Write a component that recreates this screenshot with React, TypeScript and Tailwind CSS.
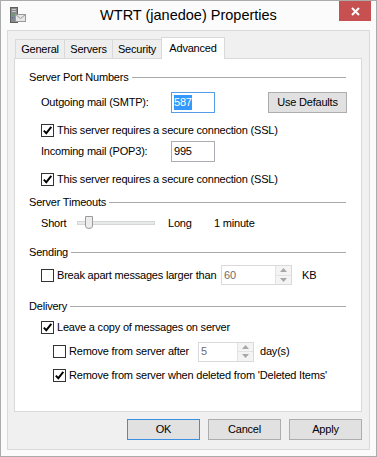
import React from "react";

const font = "font-['Liberation_Sans',Arial,sans-serif]";

function Check({ checked }: { checked: boolean }) {
  return (
    <div className="w-[13px] h-[13px] border border-[#333333] bg-white flex items-center justify-center shrink-0">
      {checked && (
        <svg width="11" height="11" viewBox="0 0 11 11">
          <path d="M1.8 5.6 L4.3 8.2 L9.3 1.8" fill="none" stroke="#000" strokeWidth="1.9" />
        </svg>
      )}
    </div>
  );
}

function CheckRow({ checked, label, indent }: { checked: boolean; label: string; indent: string }) {
  return (
    <div className={`flex items-center h-[16px] gap-[3px] ${indent}`}>
      <Check checked={checked} />
      <span>{label}</span>
    </div>
  );
}

function Header({ text, mt }: { text: string; mt: string }) {
  return (
    <div className={`flex items-center h-[16px] gap-[3px] ${mt}`}>
      <span>{text}</span>
      <div className="flex-1 h-px bg-[#a8a8a8]" />
    </div>
  );
}

function Spin({ value, w }: { value: string; w: string }) {
  return (
    <div className={`flex h-[20px] border border-[#d9d9d9] bg-white ${w}`}>
      <div className="flex-1 pl-[2px] flex items-center text-[#6d6d6d]">{value}</div>
      <div className="w-[16px] flex flex-col border-l border-[#e3e3e3]">
        <div className="flex-1 bg-[#f4f4f4] border-b border-[#e3e3e3] flex items-center justify-center">
          <svg width="7" height="4" viewBox="0 0 7 4">
            <path d="M0 4 L3.5 0 L7 4 Z" fill="#a8a8a8" />
          </svg>
        </div>
        <div className="flex-1 bg-[#f4f4f4] flex items-center justify-center">
          <svg width="7" height="4" viewBox="0 0 7 4">
            <path d="M0 0 L3.5 4 L7 0 Z" fill="#a8a8a8" />
          </svg>
        </div>
      </div>
    </div>
  );
}

function Btn({ label, def, w }: { label: string; def?: boolean; w: string }) {
  return (
    <div
      className={`h-[21px] ${w} border ${def ? "border-[#3c8fe0]" : "border-[#adadad]"} bg-[#e1e1e1] flex items-center justify-center`}
    >
      {label}
    </div>
  );
}

export default function App() {
  return (
    <div className={`w-[377px] h-[457px] ${font} text-[11px] tracking-[-0.2px] text-black`}>
      <div className="w-[377px] h-[457px] border border-[#ababab] bg-[#fbfbfb] flex flex-col">
        {/* Title bar */}
        <div className="h-[29px] relative flex items-center justify-center">
          <div className="absolute left-[9px] top-[6px]">
            <svg width="16" height="17" viewBox="0 0 16 17">
              <rect x="0.5" y="0.5" width="7" height="15" fill="#8a8a8a" stroke="#5f5f5f" />
              <rect x="2" y="2" width="4" height="1" fill="#c8c8c8" />
              <rect x="2" y="4" width="4" height="1" fill="#c8c8c8" />
              <rect x="2" y="7" width="1.5" height="1.5" fill="#4caf50" />
              <rect x="2" y="10" width="1.5" height="1.5" fill="#3a7bd5" />
              <rect x="5.5" y="7.5" width="10" height="7" fill="#e6e6e6" stroke="#9a9a9a" />
              <path d="M5.5 7.5 L10.5 11.5 L15.5 7.5" fill="none" stroke="#9a9a9a" />
            </svg>
          </div>
          <span className="text-[14.5px] tracking-normal text-black">WTRT (janedoe) Properties</span>
          <div className="absolute right-[5px] top-0 w-[32px] h-[20px] bg-[#c75050] flex items-center justify-center">
            <svg width="9" height="9" viewBox="0 0 9 9">
              <path d="M1 1 L8 8 M8 1 L1 8" stroke="#fff" strokeWidth="2" />
            </svg>
          </div>
        </div>

        {/* Dialog panel */}
        <div className="mx-[6px] mb-[6px] flex-1 border border-[#dadada] bg-[#f0f0f0] flex flex-col pl-[6px] pr-[7px] pt-[6px]">
          {/* Tabs */}
          <div className="h-[21px] flex items-end pl-[1px] relative z-10">
            <div className="h-[19px] w-[50px] border border-b-0 border-[#d9d9d9] bg-[#eeeeee] flex items-center justify-center">
              General
            </div>
            <div className="h-[19px] w-[49px] -ml-px border border-b-0 border-[#d9d9d9] bg-[#eeeeee] flex items-center justify-center">
              Servers
            </div>
            <div className="h-[19px] w-[50px] -ml-px border border-b-0 border-[#d9d9d9] bg-[#eeeeee] flex items-center justify-center">
              Security
            </div>
            <div className="h-[22px] w-[64px] -ml-px -mb-px border border-b-0 border-[#d9d9d9] bg-white flex items-start justify-center pt-[2px]">
              Advanced
            </div>
          </div>

          {/* Tab page */}
          <div className="h-[354px] border border-[#d9d9d9] bg-white pl-[14px] pr-[15px] flex flex-col">
            <Header text="Server Port Numbers" mt="mt-[10px]" />
            <div className="flex items-center h-[21px] mt-[7px] pl-[12px]">
              <span className="w-[130px]">Outgoing mail (SMTP):</span>
              <div className="w-[44px] h-[21px] border border-[#569de5] bg-white flex items-center pl-[2px]">
                <span className="bg-[#3399ff] text-white leading-[15px]">587</span>
              </div>
              <div className="ml-auto -mr-px">
                <Btn label="Use Defaults" w="w-[79px]" />
              </div>
            </div>
            <div className="mt-[9px]">
              <CheckRow checked label="This server requires a secure connection (SSL)" indent="pl-[12px]" />
            </div>
            <div className="flex items-center h-[21px] mt-[3px] pl-[12px]">
              <span className="w-[130px]">Incoming mail (POP3):</span>
              <div className="w-[44px] h-[21px] border border-[#abadb3] bg-white flex items-center pl-[2px]">
                995
              </div>
            </div>
            <div className="mt-[9px]">
              <CheckRow checked label="This server requires a secure connection (SSL)" indent="pl-[12px]" />
            </div>

            <Header text="Server Timeouts" mt="mt-[7px]" />
            <div className="flex items-center h-[20px] mt-[3px] pl-[12px]">
              <span className="w-[36px]">Short</span>
              <div className="relative w-[78px] h-[20px] flex items-center">
                <div className="w-full h-[4px] border border-[#d6d6d6] bg-[#e7eaea]" />
                <div className="absolute left-[8px] top-[3px]">
                  <svg width="8" height="13" viewBox="0 0 8 13">
                    <path d="M0.5 0.5 H7.5 V10 Q7.5 12.5 4 12.5 Q0.5 12.5 0.5 10 Z" fill="#ececec" stroke="#9c9c9c" />
                  </svg>
                </div>
              </div>
              <span className="ml-[13px] w-[46px]">Long</span>
              <span>1 minute</span>
            </div>

            <Header text="Sending" mt="mt-[11px]" />
            <div className="flex items-center h-[20px] mt-[5px] pl-[12px]">
              <div className="w-[180px] flex items-center gap-[3px]">
                <Check checked={false} />
                <span>Break apart messages larger than</span>
              </div>
              <Spin value="60" w="w-[71px]" />
              <span className="ml-[10px]">KB</span>
            </div>

            <Header text="Delivery" mt="mt-[13px]" />
            <div className="mt-[5px]">
              <CheckRow checked label="Leave a copy of messages on server" indent="pl-[12px]" />
            </div>
            <div className="flex items-center h-[21px] mt-[6px] pl-[24px]">
              <div className="w-[145px] flex items-center gap-[3px]">
                <Check checked={false} />
                <span>Remove from server after</span>
              </div>
              <Spin value="5" w="w-[56px]" />
              <span className="ml-[6px]">day(s)</span>
            </div>
            <div className="mt-[5px]">
              <CheckRow checked label="Remove from server when deleted from 'Deleted Items'" indent="pl-[24px]" />
            </div>
          </div>

          {/* Buttons */}
          <div className="flex justify-end gap-[8px] mt-[7px]">
            <Btn label="OK" def w="w-[73px]" />
            <Btn label="Cancel" w="w-[73px]" />
            <Btn label="Apply" w="w-[73px]" />
          </div>
        </div>
      </div>
    </div>
  );
}
